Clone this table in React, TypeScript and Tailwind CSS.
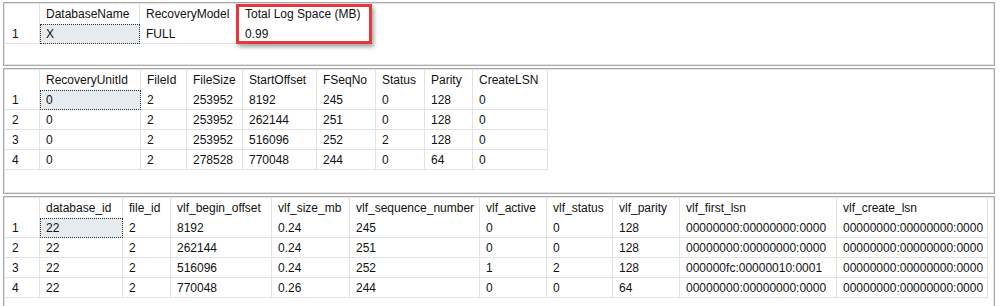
import React from 'react';

type Col = { name: string; w: number };

interface GridProps {
  cols: Col[];
  rows: string[][];
  blank: number;
  children?: React.ReactNode;
}

const Grid: React.FC<GridProps> = ({ cols, rows, blank, children }) => {
  return (
    <div className="relative border border-[#a9a9a9] bg-white">
      <div className="border border-[#e4e4e4] overflow-hidden">
        <div className="flex h-5">
          <div className="w-[35px] shrink-0 border-r border-[#e2e2e2]" />
          {cols.map((c) => (
            <div
              key={c.name}
              className="shrink-0 border-r border-[#e2e2e2] pl-[6px] leading-5 whitespace-nowrap overflow-hidden"
              style={{ width: c.w }}
            >
              {c.name}
            </div>
          ))}
        </div>
        {rows.map((r, i) => (
          <div key={i} className="flex h-5">
            <div className="w-[35px] shrink-0 border-r border-b border-[#e2e2e2] pl-[7px] leading-[21px]">
              {i + 1}
            </div>
            {r.map((v, j) => (
              <div
                key={j}
                className={
                  i === 0 && j === 0
                    ? 'shrink-0 bg-[#e6ebf0] border border-dotted border-[#333] pl-[5px] leading-[19px] whitespace-nowrap'
                    : 'shrink-0 border-r border-b border-[#e2e2e2] pl-[6px] leading-[21px] whitespace-nowrap overflow-hidden'
                }
                style={{ width: cols[j].w }}
              >
                {v}
              </div>
            ))}
          </div>
        ))}
        <div style={{ height: blank }} />
      </div>
      {children}
    </div>
  );
};

const pane1: Col[] = [
  { name: 'DatabaseName', w: 100 },
  { name: 'RecoveryModel', w: 99 },
  { name: 'Total Log Space (MB)', w: 132 },
];

const pane2: Col[] = [
  { name: 'RecoveryUnitId', w: 101 },
  { name: 'FileId', w: 46 },
  { name: 'FileSize', w: 56 },
  { name: 'StartOffset', w: 74 },
  { name: 'FSeqNo', w: 59 },
  { name: 'Status', w: 49 },
  { name: 'Parity', w: 48 },
  { name: 'CreateLSN', w: 75 },
];

const pane3: Col[] = [
  { name: 'database_id', w: 83 },
  { name: 'file_id', w: 48 },
  { name: 'vlf_begin_offset', w: 101 },
  { name: 'vlf_size_mb', w: 78 },
  { name: 'vlf_sequence_number', w: 130 },
  { name: 'vlf_active', w: 67 },
  { name: 'vlf_status', w: 66 },
  { name: 'vlf_parity', w: 67 },
  { name: 'vlf_first_lsn', w: 157 },
  { name: 'vlf_create_lsn', w: 151 },
];

const zero = '00000000:00000000:0000';

export default function App() {
  return (
    <div
      className="h-[306px] w-[1000px] overflow-hidden bg-white pt-[2px] pl-[3px] text-[12px] text-[#111]"
      style={{ fontFamily: '"Liberation Sans", Arial, sans-serif' }}
    >
      <div className="w-[992px] flex flex-col gap-[2px]">
        <Grid cols={pane1} rows={[['X', 'FULL', '0.99']]} blank={20}>
          <div className="absolute left-[232px] top-[1px] h-[40px] w-[136px] border-[3px] border-[#e8383e] shadow-[2px_3px_4px_rgba(0,0,0,0.35)]" />
        </Grid>
        <Grid
          cols={pane2}
          rows={[
            ['0', '2', '253952', '8192', '245', '0', '128', '0'],
            ['0', '2', '253952', '262144', '251', '0', '128', '0'],
            ['0', '2', '253952', '516096', '252', '2', '128', '0'],
            ['0', '2', '278528', '770048', '244', '0', '64', '0'],
          ]}
          blank={22}
        />
        <Grid
          cols={pane3}
          rows={[
            ['22', '2', '8192', '0.24', '245', '0', '0', '128', zero, zero],
            ['22', '2', '262144', '0.24', '251', '0', '0', '128', zero, zero],
            ['22', '2', '516096', '0.24', '252', '1', '2', '128', '000000fc:00000010:0001', zero],
            ['22', '2', '770048', '0.26', '244', '0', '0', '64', zero, zero],
          ]}
          blank={40}
        />
      </div>
    </div>
  );
}
